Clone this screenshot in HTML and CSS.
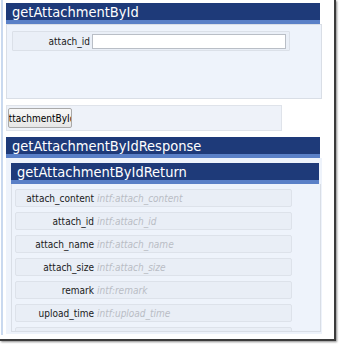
FILE: index.html
```html
<!DOCTYPE html>
<html>
<head>
<meta charset="utf-8">
<link rel="stylesheet" href="styles.css">
</head>
<body>
<div class="frame">
  <div class="page">
    <section class="op">
      <div class="hdr"><span>getAttachmentById</span></div>
      <div class="panel req">
        <div class="frow">
          <span class="flabel">attach_id</span>
          <input class="finput" type="text">
        </div>
      </div>
    </section>
    <div class="btnbar">
      <button class="btn"><span>getAttachmentById</span></button>
    </div>
    <section class="op resp">
      <div class="hdr"><span>getAttachmentByIdResponse</span></div>
      <div class="panel outer">
        <div class="hdr sub"><span>getAttachmentByIdReturn</span></div>
        <div class="panel inner">
          <div class="row"><span class="lbl">attach_content</span><span class="ph">intf:attach_content</span></div>
          <div class="row"><span class="lbl">attach_id</span><span class="ph">intf:attach_id</span></div>
          <div class="row"><span class="lbl">attach_name</span><span class="ph">intf:attach_name</span></div>
          <div class="row"><span class="lbl">attach_size</span><span class="ph">intf:attach_size</span></div>
          <div class="row"><span class="lbl">remark</span><span class="ph">intf:remark</span></div>
          <div class="row"><span class="lbl">upload_time</span><span class="ph">intf:upload_time</span></div>
          <div class="row"></div>
        </div>
      </div>
    </section>
  </div>
</div>
</body>
</html>
```
FILE: styles.css
```css
html, body {
  margin: 0;
  padding: 0;
  background: #ffffff;
}
body {
  width: 341px;
  height: 345px;
  overflow: hidden;
  font-family: "DejaVu Sans Condensed", "DejaVu Sans", sans-serif;
  font-size: 10px;
  color: #1a1a1a;
}
.frame {
  width: 336px;
  height: 341px;
  box-sizing: border-box;
  border-right: 2px solid #3c3c3c;
  border-bottom: 2px solid #3c3c3c;
  box-shadow: 1px 1px 2px #8a8a8a;
  background: #fff;
}
.page {
  margin-left: 1px;
  height: 335px;
  border-left: 2px solid #c9d9ef;
  padding: 3px 0 0 3px;
  box-sizing: border-box;
  overflow: hidden;
}
.op {
  width: 316px;
}
.hdr {
  width: 314px;
  height: 17px;
  background: #1e3a79;
  border-bottom: 4px solid #5a80c7;
  color: #ffffff;
  font-size: 14.5px;
  line-height: 18px;
  padding-left: 6px;
  box-sizing: content-box;
  white-space: nowrap;
  overflow: hidden;
}
.hdr span {
  display: block;
}
.op .hdr {
  width: 308px;
}
.panel {
  background: #eef3fb;
  border: 1px solid #d9dee6;
  box-sizing: border-box;
}
.req {
  height: 75px;
  padding: 6px 0 0 5px;
}
.frow {
  width: 276px;
  height: 18px;
  border: 1px solid #dbe0e8;
  background: #eaeff7;
  display: flex;
  align-items: center;
  border-radius: 1px;
}
.flabel {
  width: 77px;
  text-align: right;
  padding-right: 2px;
}
.finput {
  width: 194px;
  height: 15px;
  box-sizing: border-box;
  border: 1px solid #b9bec6;
  background: #fff;
  margin: 0;
  padding: 0;
}
.btnbar {
  margin-top: 6px;
  width: 276px;
  height: 26px;
  background: #eef2f9;
  border: 1px solid #dfe3ea;
  box-sizing: border-box;
  padding: 2px 0 0 1px;
}
.btn {
  width: 64px;
  height: 20px;
  margin: 0;
  padding: 0;
  border: 1px solid #a9a9a9;
  border-radius: 2px;
  background: linear-gradient(#f8f8f8, #e6e6e6);
  overflow: hidden;
  white-space: nowrap;
  font-family: "DejaVu Sans Condensed", "DejaVu Sans", sans-serif;
  font-size: 10px;
  color: #000;
  text-align: left;
  display: block;
}
.btn span {
  display: block;
  margin-left: -21px;
}
.resp {
  margin-top: 6px;
}
.outer {
  height: 176px;
  padding: 5px 0 0 5px;
  overflow: hidden;
  border: none;
  background: #eef3fb;
  width: 316px;
}
.hdr.sub {
  width: 302px;
}
.inner {
  width: 310px;
  height: 148px;
  padding: 5px 0 0 3px;
  overflow: hidden;
  border-top: none;
}
.row {
  width: 277px;
  height: 18px;
  box-sizing: border-box;
  border: 1px solid #dde2ea;
  background: #e9eef6;
  border-radius: 2px;
  display: flex;
  align-items: center;
  margin-bottom: 5px;
  white-space: nowrap;
}
.lbl {
  width: 78px;
  text-align: right;
  padding-right: 3px;
  flex: none;
}
.ph {
  color: #b9bdc5;
  font-style: italic;
}
```
